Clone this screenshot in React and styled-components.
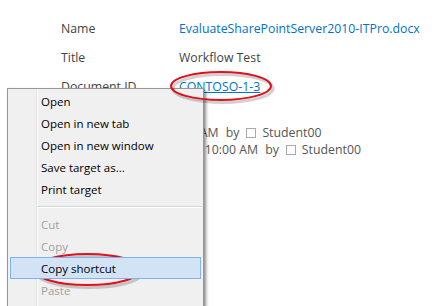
import React from "react";
import styled, { createGlobalStyle } from "styled-components";

const Global = createGlobalStyle`
  html, body { margin: 0; padding: 0; background: #fff; }
  body { width: 439px; height: 306px; overflow: hidden; }
`;

const Page = styled.div`
  position: relative;
  width: 439px;
  height: 306px;
  overflow: hidden;
  background: #fff;
  font-family: "Open Sans", "Noto Sans", sans-serif;
`;

const Details = styled.div`
  display: grid;
  grid-template-columns: 118px auto;
  grid-auto-rows: 29px;
  align-items: center;
  padding: 14px 0 0 61px;
  font-size: 12.3px;
  color: #444;
`;

const Label = styled.div`
  color: #444;
`;

const Value = styled.div`
  color: ${(p) => (p.$link ? "#0072c6" : "#444")};
  text-decoration: ${(p) => (p.$underline ? "underline" : "none")};
  white-space: nowrap;
`;

const History = styled.div`
  display: flex;
  flex-direction: column;
  padding: 23px 0 0 55px;
  font-size: 12.3px;
  line-height: 17px;
  color: #555;
`;

const HistoryLine = styled.div`
  display: flex;
  align-items: center;
  white-space: nowrap;
`;

const Presence = styled.span`
  display: inline-block;
  width: 8px;
  height: 8px;
  border: 1px solid #aaa;
  margin: 0 6px 0 7px;
`;

const By = styled.span`
  margin-left: 7px;
`;

const Menu = styled.div`
  position: absolute;
  left: 7px;
  top: 88px;
  width: 195px;
  height: 240px;
  background: #f0f0f0;
  border: 1px solid #979797;
  box-shadow: 2px 2px 3px rgba(0, 0, 0, 0.45);
  padding: 1px 0;
  font-family: "Open Sans", "Noto Sans", sans-serif;
  font-size: 11.5px;
  &::before {
    content: "";
    position: absolute;
    left: 28px;
    top: 0;
    bottom: 0;
    width: 1px;
    background: #e2e2e2;
    box-shadow: 1px 0 0 #fff;
  }
`;

const Item = styled.div`
  position: relative;
  display: flex;
  align-items: center;
  height: ${(p) => (p.$active ? "20px" : "22px")};
  margin: 0 2px;
  padding-left: ${(p) => (p.$active ? "30px" : "31px")};
  color: ${(p) => (p.$disabled ? "#a0a0a0" : "#000")};
  background: ${(p) => (p.$active ? "#d1e3f5" : "transparent")};
  border: ${(p) => (p.$active ? "1px solid #7eb4ea" : "none")};
  z-index: 1;
`;

const Separator = styled.div`
  position: relative;
  height: 13px;
  margin-left: 29px;
  margin-right: 1px;
  &::after {
    content: "";
    position: absolute;
    left: 0;
    right: 0;
    top: 6px;
    height: 1px;
    background: #d7d7d7;
    box-shadow: 0 1px 0 #fff;
  }
`;

const Annotation = styled.svg`
  position: absolute;
  left: ${(p) => p.$x}px;
  top: ${(p) => p.$y}px;
  overflow: visible;
  pointer-events: none;
`;

function Ring({ x, y, w, h }) {
  return (
    <Annotation $x={x} $y={y} width={w} height={h} viewBox={`0 0 ${w} ${h}`}>
      <ellipse
        cx={w / 2 + 2}
        cy={h / 2 + 2.5}
        rx={w / 2 - 1}
        ry={h / 2 - 1}
        fill="none"
        stroke="rgba(0,0,0,0.18)"
        strokeWidth="3"
      />
      <ellipse
        cx={w / 2}
        cy={h / 2}
        rx={w / 2 - 1}
        ry={h / 2 - 1}
        fill="none"
        stroke="#e3101b"
        strokeWidth="2"
      />
    </Annotation>
  );
}

const items = [
  { t: "Open" },
  { t: "Open in new tab" },
  { t: "Open in new window" },
  { t: "Save target as..." },
  { t: "Print target" },
  { sep: true },
  { t: "Cut", d: true },
  { t: "Copy", d: true },
  { t: "Copy shortcut", a: true },
  { t: "Paste", d: true },
];

export default function App() {
  return (
    <Page>
      <Global />
      <Details>
        <Label>Name</Label>
        <Value $link>EvaluateSharePointServer2010-ITPro.docx</Value>
        <Label>Title</Label>
        <Value>Workflow Test</Value>
        <Label>Document ID</Label>
        <Value $link $underline>CONTOSO-1-3</Value>
      </Details>
      <History>
        <HistoryLine>
          Created at 2/6/2012 9:50 AM<By>by</By><Presence />Student00
        </HistoryLine>
        <HistoryLine>
          Last modified at 2/6/2012 10:00 AM<By>by</By><Presence />Student00
        </HistoryLine>
      </History>
      <Menu>
        {items.map((it, i) =>
          it.sep ? (
            <Separator key={i} />
          ) : (
            <Item key={i} $disabled={it.d} $active={it.a}>
              {it.t}
            </Item>
          )
        )}
      </Menu>
      <Ring x={170} y={71} w={102} h={30} />
      <Ring x={33} y={253} w={109} h={33} />
    </Page>
  );
}
